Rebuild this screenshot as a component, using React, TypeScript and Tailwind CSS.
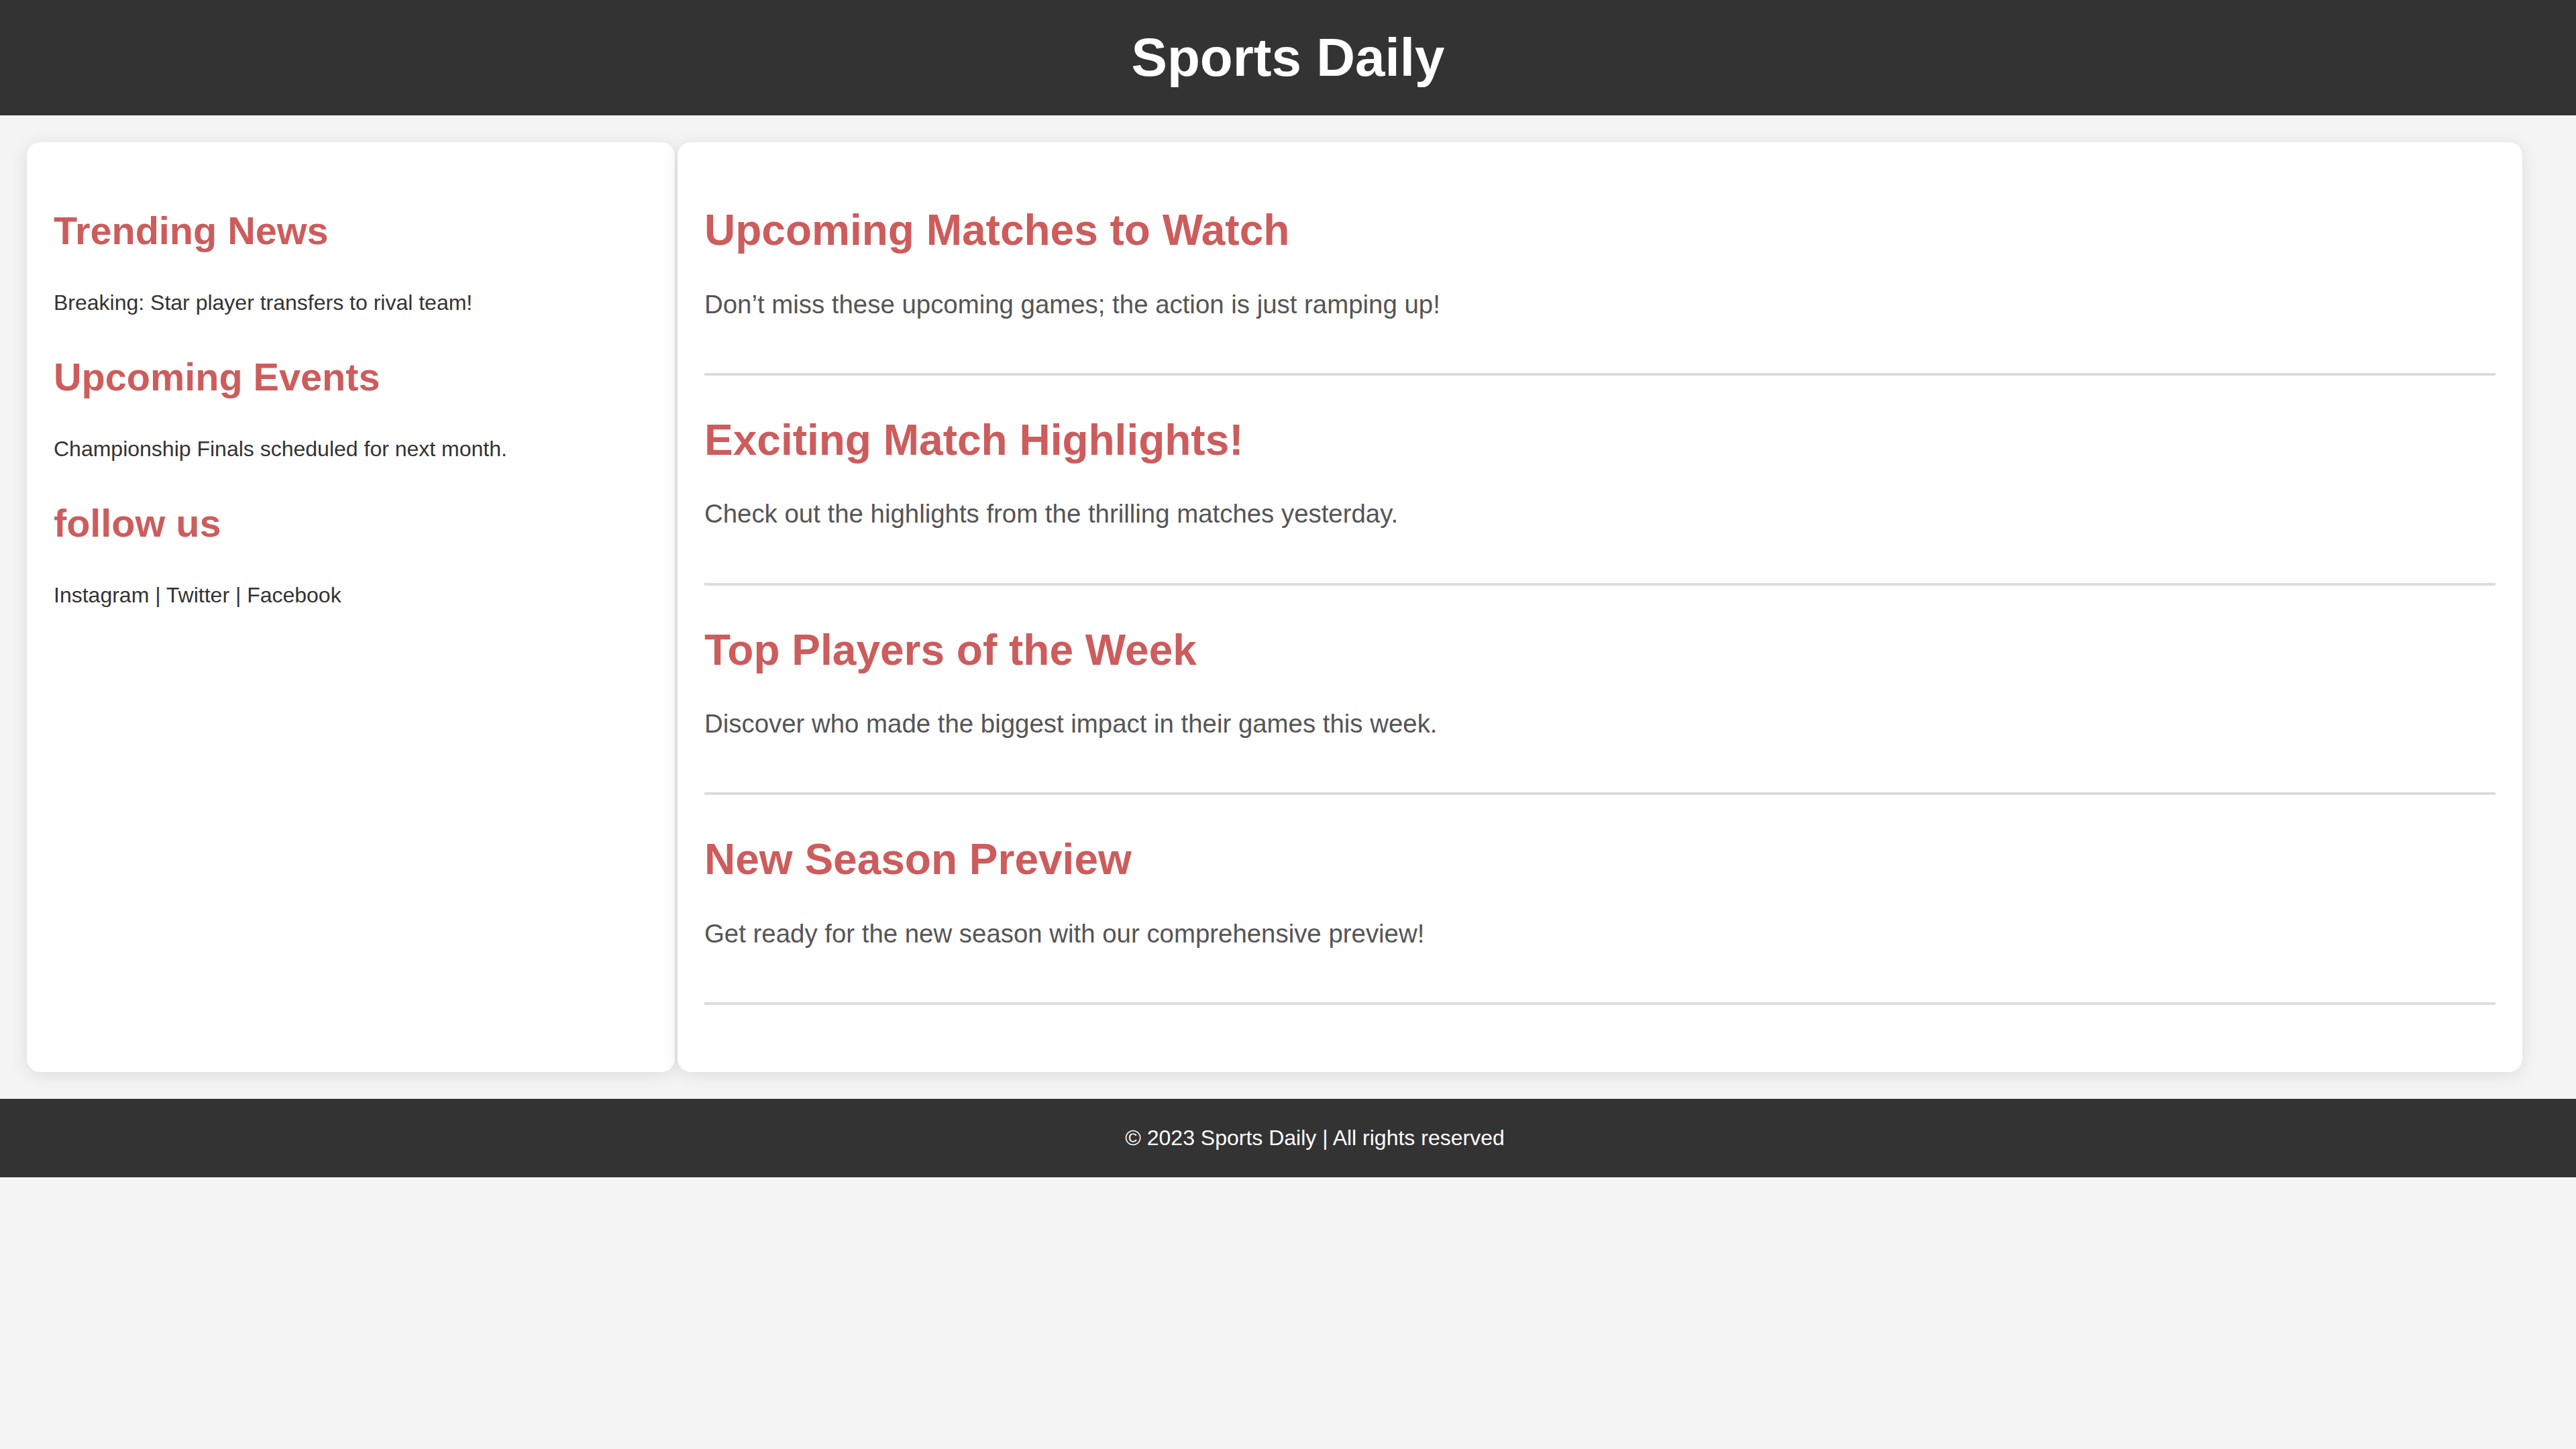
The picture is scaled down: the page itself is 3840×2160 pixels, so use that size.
const articles = [
  {
    title: "Upcoming Matches to Watch",
    text: "Don’t miss these upcoming games; the action is just ramping up!",
  },
  {
    title: "Exciting Match Highlights!",
    text: "Check out the highlights from the thrilling matches yesterday.",
  },
  {
    title: "Top Players of the Week",
    text: "Discover who made the biggest impact in their games this week.",
  },
  {
    title: "New Season Preview",
    text: "Get ready for the new season with our comprehensive preview!",
  },
];

const sidebar = [
  { title: "Trending News", text: "Breaking: Star player transfers to rival team!" },
  { title: "Upcoming Events", text: "Championship Finals scheduled for next month." },
  { title: "follow us", text: "Instagram | Twitter | Facebook" },
];

function App() {
  return (
    <div className="min-h-screen bg-[#f4f4f4] font-['Liberation_Sans',Arial,sans-serif] leading-[1.15]">
      <header className="bg-[#333] p-[40px] text-center">
        <h1 className="text-[80px] font-bold text-white">Sports Daily</h1>
      </header>

      <div className="flex gap-[4px] pl-[40px] pr-[80px] mt-[40px]">
        <aside className="w-[966px] shrink-0 rounded-[20px] bg-white p-[40px] shadow-[0_4px_25px_rgba(0,0,0,0.1)]">
          {sidebar.map((item, index) => (
            <div key={index}>
              <h2 className="mt-[59px] mb-[56px] text-[57.6px] font-bold text-[#cd5c5c]">
                {item.title}
              </h2>
              <p className="text-[32px] text-[#333]">{item.text}</p>
            </div>
          ))}
        </aside>

        <main className="flex-1 rounded-[20px] bg-white p-[40px] shadow-[0_4px_25px_rgba(0,0,0,0.1)]">
          {articles.map((article, index) => (
            <article
              key={index}
              className="mb-[60px] border-b-[4px] border-[#ddd] pb-[80px]"
            >
              <h2 className="mt-[55px] mb-[51px] text-[64px] font-bold text-[#cd5c5c]">
                {article.title}
              </h2>
              <p className="text-[38.4px] text-[#555]">{article.text}</p>
            </article>
          ))}
        </main>
      </div>

      {/* text sits a little right of centre in the original */}
      <footer className="mt-[40px] bg-[#333] pt-[40px] pb-[40px] pl-[120px] pr-[40px] text-center text-[32px] text-white">
        © 2023 Sports Daily | All rights reserved
      </footer>
    </div>
  );
}

export default App;
